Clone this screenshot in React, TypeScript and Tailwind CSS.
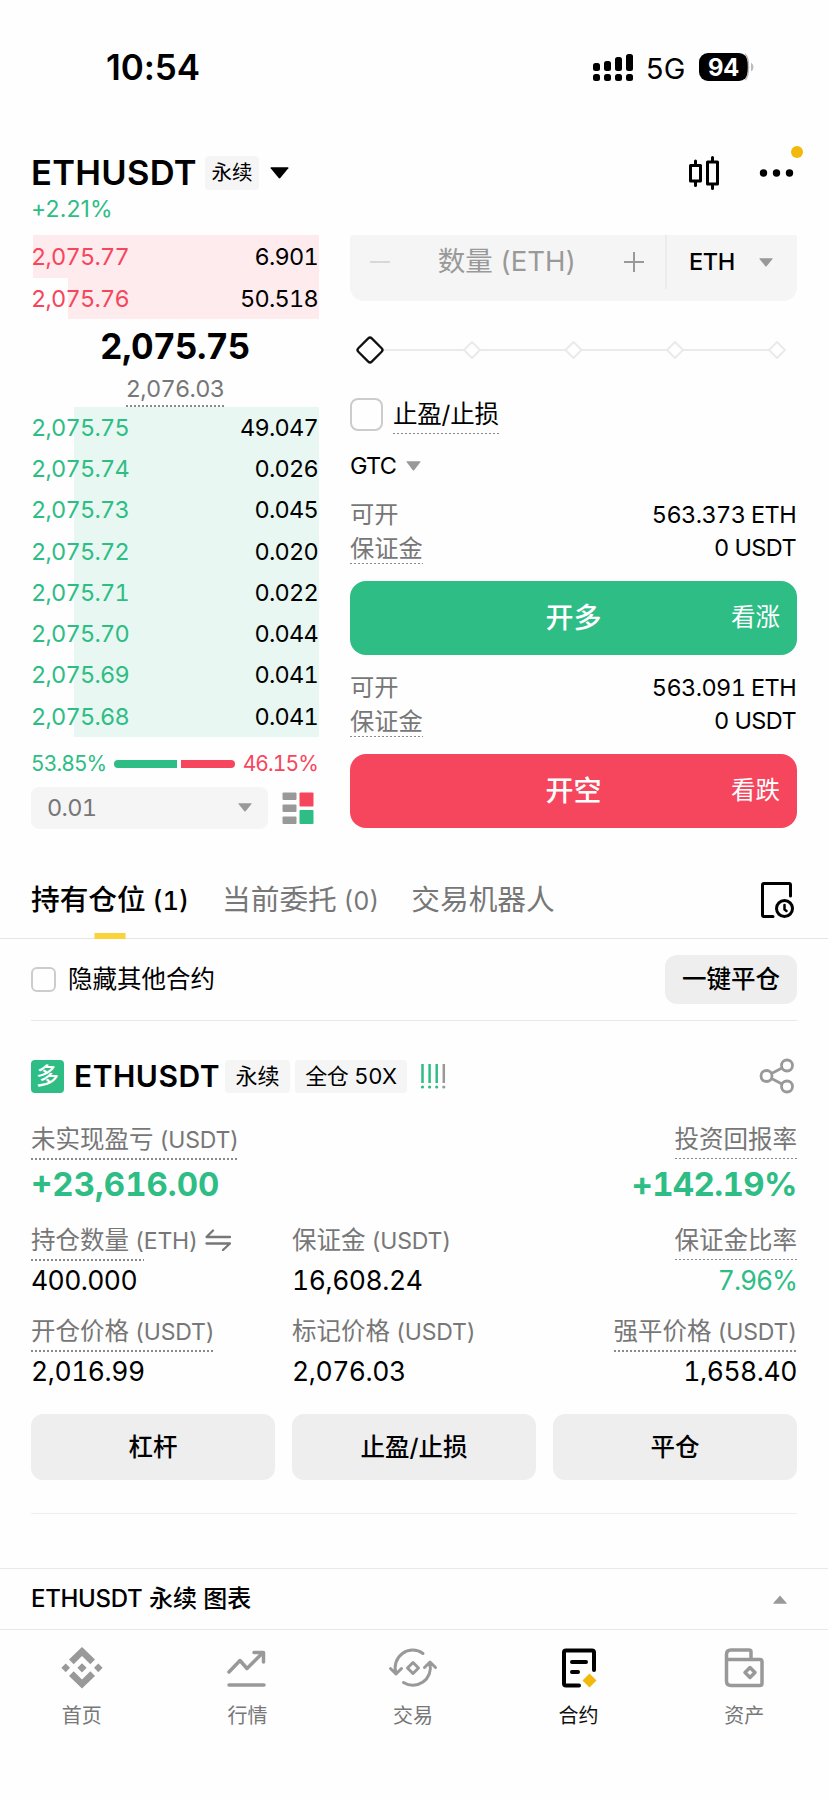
import type { ReactNode } from 'react';
import clsx from 'clsx';

interface BookRow {
  price: string;
  amount: string;
  depth: number;
}

const asks: BookRow[] = [
  { price: '2,075.77', amount: '6.901', depth: 286 },
  { price: '2,075.76', amount: '50.518', depth: 251 },
];

const bids: BookRow[] = [
  { price: '2,075.75', amount: '49.047', depth: 245 },
  { price: '2,075.74', amount: '0.026', depth: 245 },
  { price: '2,075.73', amount: '0.045', depth: 245 },
  { price: '2,075.72', amount: '0.020', depth: 245 },
  { price: '2,075.71', amount: '0.022', depth: 245 },
  { price: '2,075.70', amount: '0.044', depth: 245 },
  { price: '2,075.69', amount: '0.041', depth: 245 },
  { price: '2,075.68', amount: '0.041', depth: 245 },
];

function Caret({ className = '', up = false }: { className?: string; up?: boolean }) {
  return (
    <svg viewBox="0 0 14 9" preserveAspectRatio="none" className={clsx('shrink-0', className)} fill="currentColor">
      {up ? <path d="M7 0.4 13.6 8q.3.8-.5.8H.9Q.1 8.8.4 8Z" /> : <path d="M.9.2h12.2q.8 0 .4.8L7.6 8.3q-.6.6-1.2 0L.5 1Q.1.2.9.2Z" />}
    </svg>
  );
}

// Label with the dotted "tap for help" underline
function Hint({ children, line = '-bottom-[8px]', className = '' }: { children: ReactNode; line?: string; className?: string }) {
  return (
    <span className={clsx('relative inline-block', className)}>
      {children}
      <span className={clsx('absolute left-0 z-10 h-[1.5px] w-full bg-[repeating-linear-gradient(90deg,#8a8a8a_0_2px,transparent_2px_4px)]', line)} />
    </span>
  );
}

function Unit({ children }: { children: ReactNode }) {
  return <span className="text-[23px] tracking-[-0.2px]"> {children}</span>;
}

function StatusBar() {
  const bars = [8, 10, 14, 17];
  return (
    <div className="flex h-[134px] items-center pl-[106px] pr-[73px]">
      <span className="text-[35px] font-semibold leading-none tracking-[-0.1px] proportional-nums">10:54</span>
      <div className="ml-auto flex items-center">
        <svg width="42" height="30" viewBox="0 0 42 30">
          {bars.map((h, i) => (
            <g key={i}>
              <rect x={1 + i * 11} y={19 - h} width="7" height={h} rx="2.5" />
              <rect x={1 + i * 11} y="22" width="7" height="7" rx="2.5" />
            </g>
          ))}
        </svg>
        <span className="ml-[12px] mt-[2px] text-[29px] leading-none tracking-[-0.5px]">5G</span>
        <svg width="56" height="28" viewBox="0 0 56 28" className="ml-[14px]">
          <rect width="49" height="28" rx="9" />
          <path d="M46 1q3.5 3 3.5 13T46 27" fill="none" stroke="#bbb" strokeWidth="1.5" />
          <path d="M52 9.5q2.5 1.5 2.5 4.5T52 18.5Z" fill="#bbb" />
          <text x="24.5" y="22.5" textAnchor="middle" fontSize="24" fontWeight="700" fill="#fff">94</text>
        </svg>
      </div>
    </div>
  );
}

function Header() {
  return (
    <div className="h-[101px] px-[31px] pt-[21px]">
      <div className="flex h-[36px] items-center">
        <h1 className="w-[165px] text-[34.5px] font-semibold leading-none tracking-[0.3px]">ETHUSDT</h1>
        <span className="ml-[9px] flex h-[34px] w-[54px] items-center justify-center rounded-[4px] bg-[#f5f5f5] text-[20.5px] leading-none">永续</span>
        <Caret className="ml-[11px] h-[12px] w-[19px]" />
        <svg width="32" height="36" viewBox="0 0 32 36" className="ml-auto" fill="none" stroke="#000" strokeWidth="3" strokeLinecap="round" strokeLinejoin="round">
          <rect x="2.5" y="10.5" width="10" height="15.5" />
          <path d="M7.5 6v4M7.5 26.5v4M24.5 2.5v4M24.5 29.5v4" />
          <rect x="19.5" y="7" width="10" height="22" />
        </svg>
        <div className="relative ml-[39px]">
          <svg width="38" height="8" viewBox="0 0 38 8">
            <circle cx="4.5" cy="4" r="3.7" />
            <circle cx="17.5" cy="4" r="3.7" />
            <circle cx="30.5" cy="4" r="3.7" />
          </svg>
          <span className="absolute -top-[23px] left-[32px] h-[12px] w-[12px] rounded-full bg-[#f0b90b]" />
        </div>
      </div>
      <div className="mt-[5px] text-[23px] leading-[26px] tracking-[0.1px] text-[#2ebd85] proportional-nums">+2.21%</div>
    </div>
  );
}

function DepthRow({ row, side }: { row: BookRow; side: 'ask' | 'bid' }) {
  return (
    <div className="relative flex h-[41.25px] items-center justify-between text-[23.5px] leading-none tracking-[-0.75px]">
      <span
        className={clsx('absolute inset-y-0 right-0', side === 'ask' ? 'bg-[#feebed]' : 'bg-[#e8f7f1]')}
        style={{ width: row.depth }}
      />
      <span className={clsx('relative', side === 'ask' ? 'text-[#f6465d]' : 'text-[#2ebd85]')}>{row.price}</span>
      <span className="relative pr-px">{row.amount}</span>
    </div>
  );
}

function OrderBook() {
  return (
    <div className="w-[288px]">
      <div className="ml-[2px] h-[1.5px] bg-[#feebed]" />
      {asks.map(r => <DepthRow key={r.price} row={r} side="ask" />)}
      <div className="flex h-[54px] items-center justify-center text-[35px] font-bold leading-none tracking-[-0.6px]">2,075.75</div>
      <div className="flex h-[34px] items-center justify-center pb-[2px] text-[23.5px] leading-none tracking-[-0.7px] text-[#777]">
        <Hint line="-bottom-[6px]">2,076.03</Hint>
      </div>
      {bids.map(r => <DepthRow key={r.price} row={r} side="bid" />)}
      <div className="flex h-[49.5px] items-center justify-between pr-px pt-[4px] text-[21px] leading-none tracking-[-0.9px]">
        <span className="text-[#2ebd85]">53.85%</span>
        <div className="flex h-[8px] w-[121px] gap-[4px]">
          <span className="w-[63px] rounded-l-full bg-[#2ebd85]" />
          <span className="flex-1 rounded-r-full bg-[#f6465d]" />
        </div>
        <span className="text-[#f6465d]">46.15%</span>
      </div>
      <div className="flex items-center">
        <div className="flex h-[42px] w-[237px] items-center justify-between rounded-[8px] bg-[#f5f5f5] px-[16px] text-[23.5px] leading-none tracking-[-0.7px] text-[#777]">
          0.01
          <Caret className="h-[9px] w-[14px] text-[#999]" />
        </div>
        <svg width="32" height="32" viewBox="0 0 32 32" className="ml-[14px]">
          <rect x="0.5" y="0.5" width="14" height="7.5" rx="1" fill="#999" />
          <rect x="0.5" y="12.5" width="14" height="7.5" rx="1" fill="#999" />
          <rect x="0.5" y="24.5" width="14" height="7.5" rx="1" fill="#999" />
          <rect x="17.5" y="0.5" width="14" height="14" rx="1" fill="#f6465d" />
          <rect x="17.5" y="18" width="14" height="14" rx="1" fill="#2ebd85" />
        </svg>
      </div>
    </div>
  );
}

function TradeSide({ open, label, hint, className }: { open: string; label: string; hint: string; className: string }) {
  return (
    <div className="text-[24.3px] leading-none">
      <div className="flex h-[32.5px] items-center justify-between pb-[1.5px]">
        <span className="text-[#777]">可开</span>
        <span className="mr-[1px] text-[23.5px] tracking-[-0.6px]">{open}</span>
      </div>
      <div className="flex h-[33px] items-center justify-between">
        <Hint className="text-[#777]" line="-bottom-[4px]">保证金</Hint>
        <span className="mr-[1px] text-[23.5px] tracking-[-0.6px]">0 USDT</span>
      </div>
      <button className={clsx('relative mt-[16px] flex h-[74px] w-full items-center justify-center rounded-[16px] text-white', className)}>
        <span className="text-[28px] font-medium leading-none">{label}</span>
        <span className="absolute right-[17px] text-[24.5px] leading-none">{hint}</span>
      </button>
    </div>
  );
}

function OrderForm() {
  return (
    <div className="w-[447px]">
      <div className="flex h-[66px] items-start rounded-b-[14px] rounded-t-[3px] bg-[#f5f5f5]">
        <div className="flex h-[53px] flex-1 items-center justify-between pl-[20px] pr-[21px] text-[#999]">
          <svg width="20" height="20" viewBox="0 0 20 20" stroke="#d8d8d8" strokeWidth="2"><path d="M0 10h20" /></svg>
          <span className="text-[27.5px] leading-none">数量 (ETH)</span>
          <svg width="20" height="20" viewBox="0 0 20 20" stroke="#999" strokeWidth="2"><path d="M0 10h20M10 0v20" /></svg>
        </div>
        <div className="flex h-[54px] w-[132px] items-center justify-between border-l-2 border-[#ececec] pl-[22px] pr-[24px] text-[23.5px] font-medium leading-none tracking-[-0.4px]">
          ETH
          <Caret className="h-[9px] w-[14px] text-[#999]" />
        </div>
      </div>
      <svg width="447" height="36" viewBox="0 0 447 36" className="mt-[31px]" fill="#fff" strokeWidth="2" strokeLinejoin="round">
        <path d="M20 18h407" stroke="#eaeaea" />
        {[122, 223.5, 325, 427].map(x => (
          <path key={x} d={`M${x - 8} 18l8-8 8 8-8 8Z`} stroke="#eaeaea" />
        ))}
        <rect x="10.5" y="8.5" width="19" height="19" rx="2.5" transform="rotate(45 20 18)" stroke="#111" strokeWidth="2.3" />
      </svg>
      <div className="mt-[30px] flex h-[32px] items-center">
        <span className="h-[33px] w-[33px] rounded-[8px] border-[2.5px] border-[#ccc]" />
        <Hint className="ml-[10px] text-[24.5px] leading-none tracking-[-0.2px]" line="-bottom-[8px]">止盈/止损</Hint>
      </div>
      <div className="mt-[18.5px] flex h-[34px] items-center text-[23.5px] leading-none tracking-[-0.8px]">
        GTC
        <Caret className="ml-[10px] h-[10px] w-[15px] text-[#999]" />
      </div>
      <div className="mt-[16.5px]">
        <TradeSide open="563.373 ETH" label="开多" hint="看涨" className="bg-[#2ebd85]" />
      </div>
      <div className="mt-[17.5px]">
        <TradeSide open="563.091 ETH" label="开空" hint="看跌" className="bg-[#f6465d]" />
      </div>
    </div>
  );
}

function Tabs() {
  return (
    <div className="flex h-[76px] items-center border-b border-[#e5e5e5] pl-[31px] pr-[34px] text-[28.7px] leading-none text-[#777]">
      <div className="relative flex h-full items-center font-medium text-black">
        <span>持有仓位<span className="text-[25.5px]"> (1)</span></span>
        <span className="absolute -bottom-px left-1/2 h-[6px] w-[31px] -translate-x-1/2 bg-[#f8d33a]" />
      </div>
      <span className="ml-[33px]">当前委托<span className="text-[25px]"> (0)</span></span>
      <span className="ml-[32px]">交易机器人</span>
      <svg width="34" height="38" viewBox="0 0 34 38" className="mb-[2px] ml-auto" fill="none" stroke="#000" strokeWidth="3" strokeLinecap="round" strokeLinejoin="round">
        <path d="M13 35.5H4q-1.5 0-1.5-1.5V4q0-1.5 1.5-1.5h25q1.5 0 1.5 1.5v11" />
        <circle cx="24.5" cy="27.5" r="8" />
        <path d="M24.5 24v4.5l2 1.5" strokeWidth="2.5" />
      </svg>
    </div>
  );
}

function Metric({ label, unit, value, hint = false, align = '', color = '' }: {
  label: string;
  unit?: string;
  value: string;
  hint?: boolean;
  align?: string;
  color?: string;
}) {
  const text = <>{label}{unit && <Unit>({unit})</Unit>}</>;
  return (
    <div className={clsx('flex flex-col', align)}>
      <div className="flex h-[36px] items-center text-[24.5px] leading-none text-[#777]">
        {hint ? <Hint>{text}</Hint> : <span>{text}</span>}
      </div>
      <div className={clsx('flex h-[44px] items-center text-[26.5px] leading-none tracking-[-0.45px]', color)}>{value}</div>
    </div>
  );
}

function Position() {
  return (
    <div className="px-[31px] pt-[37px]">
      <div className="flex h-[36px] items-center">
        <span className="flex h-[33px] w-[33px] items-center justify-center rounded-[4px] bg-[#2ebd85] text-[23px] font-medium leading-none text-white">多</span>
        <h2 className="ml-[10px] w-[146px] text-[30px] font-semibold leading-none tracking-[0.5px]">ETHUSDT</h2>
        <span className="ml-[5px] flex h-[33px] w-[65px] items-center justify-center rounded-[4px] bg-[#f5f5f5] text-[22px] leading-none">永续</span>
        <span className="ml-[5px] flex h-[33px] w-[112px] items-center justify-center whitespace-nowrap rounded-[4px] bg-[#f5f5f5] text-[22px] leading-none tracking-[-0.3px]">全仓 50X</span>
        <svg width="26" height="26" viewBox="0 0 26 26" className="ml-[13px]" strokeWidth="2.5">
          {['#2ebd85', '#2ebd85', '#2ebd85', '#999'].map((c, i) => (
            <g key={i} stroke={c} fill={c}>
              <path d={`M${2.5 + i * 7.1} 1v19`} />
              <circle cx={2.5 + i * 7.1} cy="24" r="1.6" stroke="none" />
            </g>
          ))}
        </svg>
        <svg width="36" height="36" viewBox="0 0 36 36" className="ml-auto mr-[2px]" fill="none" stroke="#999" strokeWidth="2.8">
          <circle cx="7.5" cy="18" r="5.5" />
          <circle cx="28" cy="7.5" r="5.5" />
          <circle cx="28" cy="28.5" r="5.5" />
          <path d="M12.5 15.5 23 10M12.5 20.5 23 26" />
        </svg>
      </div>
      <div className="mt-[27px] flex justify-between text-[#2ebd85]">
        <div>
          <div className="flex h-[36px] items-center text-[24.5px] leading-none text-[#777]"><Hint>未实现盈亏<Unit>(USDT)</Unit></Hint></div>
          <div className="mt-[9px] text-[33px] font-bold leading-[36px]">+23,616.00</div>
        </div>
        <div className="flex flex-col items-end">
          <div className="flex h-[36px] items-center text-[24.5px] leading-none text-[#777]"><Hint>投资回报率</Hint></div>
          <div className="mt-[9px] text-[33px] font-bold leading-[36px] tracking-[-0.6px]">+142.19%</div>
        </div>
      </div>
      <div className="mt-[20px] grid grid-cols-3 gap-x-[17px] gap-y-[11px]">
        <div>
          <div className="flex h-[36px] items-center whitespace-nowrap text-[24.5px] leading-none text-[#777]">
            <Hint className="w-[113px]">持仓数量<Unit>(ETH)</Unit></Hint>
            <svg width="26" height="22" viewBox="0 0 26 22" className="ml-[61px]" fill="none" stroke="#777" strokeWidth="2.3" strokeLinecap="round" strokeLinejoin="round">
              <path d="M25 8H1.5L8 1.5M1.5 14.5H25L18 21" />
            </svg>
          </div>
          <div className="flex h-[44px] items-center text-[26.5px] leading-none tracking-[-0.6px]">400.000</div>
        </div>
        <Metric label="保证金" unit="USDT" value="16,608.24" />
        <Metric label="保证金比率" value="7.96%" hint align="items-end" color="tracking-[-1.1px] text-[#2ebd85]" />
        <Metric label="开仓价格" unit="USDT" value="2,016.99" hint />
        <Metric label="标记价格" unit="USDT" value="2,076.03" />
        <Metric label="强平价格" unit="USDT" value="1,658.40" hint align="items-end" />
      </div>
      <div className="mt-[21px] grid grid-cols-3 gap-[17px] text-[24.5px] font-medium leading-none">
        {['杠杆', '止盈/止损', '平仓'].map(t => (
          <button key={t} className="h-[66px] rounded-[12px] bg-[#eee]">{t}</button>
        ))}
      </div>
      <div className="mt-[33px] h-px bg-[#eee]" />
    </div>
  );
}

const navItems = [
  {
    label: '首页',
    icon: (
      <g fill="#999">
        <path d="M21 0 34 12.5l-4.7 4.7L21 9l-8.3 8.2L8 12.5ZM21 41.5 8 29l4.7-4.7L21 32.5l8.3-8.2L34 29Z" />
        <path d="m21 16.2 4.6 4.6-4.6 4.6-4.6-4.6ZM4.7 16.4 9 20.8l-4.3 4.4L.4 20.8ZM37.3 16.4l4.3 4.4-4.3 4.4-4.3-4.4Z" />
      </g>
    ),
  },
  {
    label: '行情',
    icon: <path d="M3 25 14 13.5l7 8L36.5 6M28 5.5h9.5V15M3 38h35" stroke="#999" />,
  },
  {
    label: '交易',
    icon: (
      <g stroke="#999" strokeWidth="3">
        <path d="M31 6.5A17.5 17.5 0 0 0 4 26M-1.5 21.5 4 27l5.5-5.5M11.5 35.5A17.5 17.5 0 0 0 38 17M32.5 20.5 38 15l5.5 5.5" />
        <path d="m21 15.5 5.5 5.5-5.5 5.5-5.5-5.5Z" />
      </g>
    ),
  },
  {
    label: '合约',
    icon: (
      <g stroke="#000" strokeWidth="4">
        <path d="M21 38.5H8q-2 0-2-2V5.5q0-2 2-2h26q2 0 2 2V23M14 15h14M14 25h6" />
        <path d="m31.500 26.500 7 7-7 7-7-7Z" fill="#f0b90b" stroke="none" />
      </g>
    ),
  },
  {
    label: '资产',
    icon: (
      <g stroke="#999">
        <path d="M3.5 13.5v-6Q3.5 3 8 3h18q2 0 2 2v7M3.5 12.500H37q2 0 2 2v22q0 2-2 2H8q-4.500 0-4.500-4.500Z" />
        <path d="m27 20.500 5 5-5 5-5-5Z" />
      </g>
    ),
  },
];

export default function App() {
  return (
    <div className="h-[1801px] w-[828px] overflow-hidden bg-[#fefefe] font-['Inter','Noto_Sans_CJK_SC',sans-serif] tabular-nums text-black">
      <StatusBar />
      <Header />
      <div className="flex h-[628px] justify-between px-[31px]">
        <OrderBook />
        <OrderForm />
      </div>
      <Tabs />
      <div className="mx-[31px] flex h-[82px] items-center border-b border-[#e8e8e8]">
        <span className="h-[25px] w-[25px] rounded-[6px] border-2 border-[#ccc]" />
        <span className="ml-[12px] text-[24.5px] leading-none">隐藏其他合约</span>
        <button className="ml-auto h-[49px] w-[132px] rounded-[12px] bg-[#eee] text-[24.5px] font-medium leading-none">一键平仓</button>
      </div>
      <Position />
      <div className="mt-[54px] flex h-[62px] items-center justify-between border-y border-[#e8e8e8] pl-[31px] pr-[41px]">
        <span className="text-[24px] font-medium leading-none"><span className="tracking-[-0.3px]">ETHUSDT</span> 永续 图表</span>
        <Caret up className="h-[9px] w-[14px] text-[#999]" />
      </div>
      <nav className="-ml-px grid w-[828px] grid-cols-5 pt-[17px]">
        {navItems.map(item => (
          <div key={item.label} className="flex flex-col items-center">
            <svg width="42" height="42" viewBox="0 0 42 42" className="overflow-visible" fill="none" strokeWidth="3.5" strokeLinecap="round" strokeLinejoin="round">
              {item.icon}
            </svg>
            <span className={clsx('mt-[16px] text-[20px] leading-[22px]', item.label === '合约' ? 'text-[#111]' : 'text-[#777]')}>{item.label}</span>
          </div>
        ))}
      </nav>
    </div>
  );
}
